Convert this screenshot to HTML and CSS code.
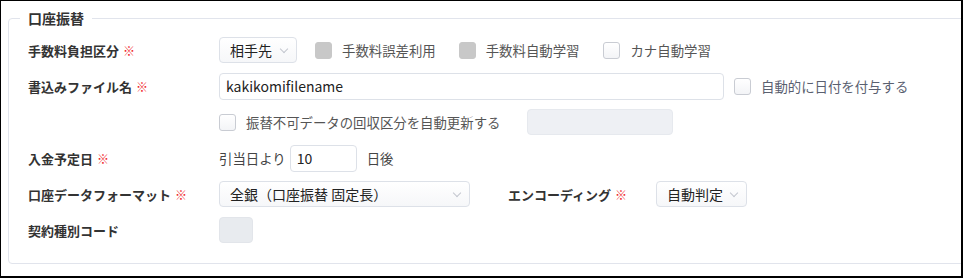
FILE: index.html
```html
<!DOCTYPE html>
<html>
<head>
    <meta charset="utf-8">
    <link rel="stylesheet" href="styles.css">
</head>
<body>
    <div class="frame">
        <fieldset class="panel">
            <legend class="panel-title">口座振替</legend>

            <div class="form-grid">
                <div class="label">手数料負担区分<span class="req">※</span></div>
                <div class="field">
                    <div class="select w-78">相手先<span class="chevron"></span></div>
                    <label class="check gap-l18"><span class="box disabled"></span>手数料誤差利用</label>
                    <label class="check gap-l23"><span class="box disabled"></span>手数料自動学習</label>
                    <label class="check gap-l24"><span class="box"></span>カナ自動学習</label>
                </div>

                <div class="label">書込みファイル名<span class="req">※</span></div>
                <div class="field">
                    <input class="text w-505" type="text" value="kakikomifilename">
                    <label class="check gap-l10 muted"><span class="box"></span>自動的に日付を付与する</label>
                </div>

                <div class="label"></div>
                <div class="field">
                    <label class="check"><span class="box"></span>振替不可データの回収区分を自動更新する</label>
                    <div class="text readonly w-146 gap-l27"></div>
                </div>

                <div class="label">入金予定日<span class="req">※</span></div>
                <div class="field">
                    <span class="plain">引当日より</span>
                    <input class="text w-67 gap-l4" type="text" value="10">
                    <span class="plain gap-l10">日後</span>
                </div>

                <div class="label">口座データフォーマット<span class="req">※</span></div>
                <div class="field">
                    <div class="select w-251">全銀（口座振替 固定長）<span class="chevron"></span></div>
                    <div class="label inline gap-l38">エンコーディング<span class="req">※</span></div>
                    <div class="select w-91 gap-l29">自動判定<span class="chevron"></span></div>
                </div>

                <div class="label">契約種別コード</div>
                <div class="field">
                    <div class="text disabled-box w-34"></div>
                </div>
            </div>
        </fieldset>
    </div>
</body>
</html>
```

FILE: styles.css
```css
* {
    margin: 0;
    padding: 0;
    box-sizing: border-box;
}

html, body {
    width: 963px;
    height: 278px;
    overflow: hidden;
    background: #fff;
}

body {
    font-family: "Noto Sans CJK JP", "Noto Sans", sans-serif;
    font-size: 13px;
    color: #333;
}

.frame {
    width: 963px;
    height: 278px;
    border-top: 1px solid #000;
    border-left: 1px solid #000;
    border-right: 2px solid #000;
    border-bottom: 2px solid #000;
    overflow: hidden;
    padding: 8px 0 0 7px;
}

.panel {
    width: 980px;
    height: 255px;
    border: 1px solid #e1e4ec;
    border-radius: 4px;
    padding: 0 0 0 19px;
}

.panel-title {
    font-size: 14px;
    font-weight: 700;
    color: #333;
    padding: 0 8px;
    margin-left: -8px;
    line-height: 18px;
}

.form-grid {
    display: grid;
    grid-template-columns: 191px 1fr;
    grid-auto-rows: 26px;
    row-gap: 10px;
    margin-top: 10px;
}

.label {
    display: flex;
    align-items: center;
    font-weight: 700;
    font-size: 13px;
    color: #333;
    white-space: nowrap;
}

.req {
    color: #f0262b;
    font-weight: 400;
    font-size: 12px;
    margin-left: 4px;
}

.field {
    display: flex;
    align-items: center;
    white-space: nowrap;
}

.select {
    position: relative;
    height: 26px;
    border: 1px solid #dde1e8;
    border-radius: 4px;
    background: linear-gradient(#fff, #f6f7f9);
    font-size: 14px;
    color: #222;
    padding: 0 0 0 10px;
    display: flex;
    align-items: center;
}

.chevron {
    position: absolute;
    right: 9px;
    top: 8px;
    width: 6px;
    height: 6px;
    border-right: 1px solid #c3c7cf;
    border-bottom: 1px solid #c3c7cf;
    transform: rotate(45deg);
}

.text {
    height: 27px;
    border: 1px solid #dde1e8;
    border-radius: 4px;
    background: #fff;
    font-family: "Noto Sans CJK JP", "Noto Sans", sans-serif;
    font-size: 14px;
    color: #222;
    padding: 0 6px;
    outline: none;
}

.readonly {
    background: #eef0f4;
    border-color: #e6e9ee;
    height: 26px;
}

.disabled-box {
    background: #e8ebef;
    border-color: #e2e5ea;
    height: 26px;
}

.check {
    display: flex;
    align-items: center;
    gap: 10px;
    font-size: 13.4px;
    color: #555;
}

.muted {
    color: #5a6070;
}

.box {
    width: 17px;
    height: 17px;
    border: 1px solid #c9ccd3;
    border-radius: 3px;
    background: linear-gradient(#fff, #f3f4f7);
}

.box.disabled {
    background: #c8c8c8;
    border-color: #c8c8c8;
}

.plain {
    font-size: 13.4px;
    color: #444;
}

.inline {
    display: inline-flex;
}

.w-34 { width: 34px; }
.w-67 { width: 67px; }
.w-78 { width: 78px; }
.w-91 { width: 91px; }
.w-146 { width: 146px; }
.w-251 { width: 251px; }
.w-505 { width: 505px; }

.gap-l4 { margin-left: 4px; }
.gap-l10 { margin-left: 10px; }
.gap-l18 { margin-left: 18px; }
.gap-l23 { margin-left: 23px; }
.gap-l24 { margin-left: 24px; }
.gap-l27 { margin-left: 27px; }
.gap-l29 { margin-left: 29px; }
.gap-l38 { margin-left: 38px; }
```
